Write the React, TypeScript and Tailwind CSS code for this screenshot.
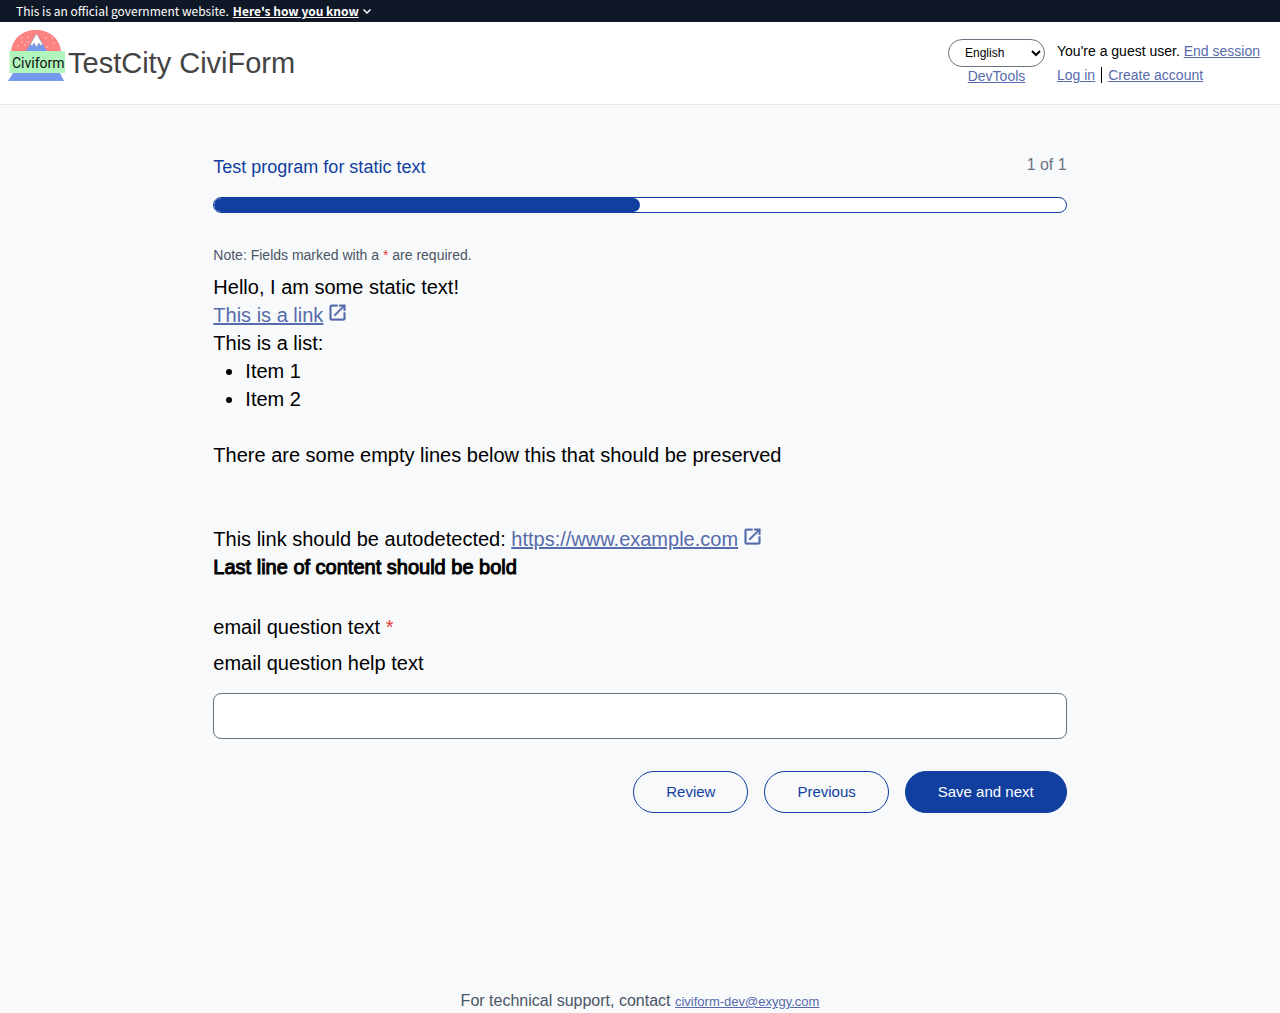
import type { ReactNode } from "react";

const link = "text-[#566bac] underline";

function Logo() {
  return (
    <svg viewBox="0 0 58 52" className="h-[52px] w-[58px] shrink-0" role="img" aria-label="Civiform">
      <path d="M3 22C4 8 15 0 28 0s24 8 25 22z" fill="#fc8181" />
      <path d="M17.500 22L28.500 3.500 39.500 22z" fill="#7699f0" />
      <path d="M22.500 14L28.500 3.500 34.500 14l-1.500 2-2-3-2.500 4-2.500-4-2 3z" fill="#fff" stroke="#8a7f8c" strokeWidth=".4" />
      <g fill="#fed7d7">
        <circle cx="20" cy="7" r=".8" />
        <circle cx="14" cy="8" r=".8" />
        <circle cx="10" cy="16" r=".8" />
        <circle cx="17" cy="15" r=".8" />
        <circle cx="20" cy="12" r=".8" />
        <circle cx="14" cy="12" r=".8" />
        <circle cx="38" cy="8" r=".8" />
        <circle cx="44" cy="8" r=".8" />
        <circle cx="46" cy="13" r=".8" />
        <circle cx="39" cy="17" r=".8" />
      </g>
      <path d="M5 43h47l4 8H0z" fill="#7699f0" />
      <rect x="1.500" y="21" width="55.500" height="22" fill="#b0f5bb" />
      <text x="4" y="38" fontFamily="Roboto, sans-serif" fontSize="14" fill="#111">
        Civiform
      </text>
    </svg>
  );
}

function ExternalLink({ href, children }: { href: string; children: ReactNode }) {
  return (
    <a href={href} className="text-[#566bac]">
      <span className="underline">{children}</span>
      <svg
        viewBox="0 0 24 24"
        className="ml-1 inline size-[21px] align-[-1px]"
        fill="currentColor"
        stroke="currentColor"
        strokeWidth=".4"
        aria-hidden="true"
      >
        <path d="M19 19H5V5h7V3H5a2 2 0 0 0-2 2v14a2 2 0 0 0 2 2h14c1.100 0 2-.9 2-2v-7h-2v7zM14 3v2h3.590l-9.830 9.830 1.410 1.410L19 6.410V10h2V3h-7z" />
      </svg>
    </a>
  );
}

export default function App() {
  return (
    <div className="flex min-h-screen flex-col bg-[#f8f9fb] font-['Liberation_Sans',Arial,sans-serif] text-black">
      <aside className="flex h-[22px] items-center gap-1 bg-gray-900 px-4 font-['Noto_Sans_CJK_SC',sans-serif] text-xs text-white">
        <p>This is an official government website.</p>
        <button type="button" className="flex items-center gap-0.5 font-bold">
          <span className="underline">Here's how you know</span>
          <svg viewBox="0 0 12 12" className="size-3" fill="none" stroke="currentColor" strokeWidth="1.500" aria-hidden="true">
            <path d="M2.500 4.500L6 8l3.500-3.500" />
          </svg>
        </button>
      </aside>

      <header className="flex items-start justify-between border-b border-gray-200 bg-white pt-2 pr-5 pb-[17px] pl-2">
        <div className="flex items-start gap-0.5">
          <Logo />
          <h1 className="pt-[15px] text-[29px] leading-9 text-[#444]">TestCity CiviForm</h1>
        </div>
        <div className="flex gap-3 pt-[9px]">
          <div className="flex flex-col items-center">
            <select
              aria-label="Language"
              defaultValue="en"
              className="h-7 w-[97px] rounded-full border border-gray-500 bg-white px-3 text-xs"
            >
              <option value="en">English</option>
            </select>
            <a href="#devtools" className={`${link} text-sm leading-[18px]`}>
              DevTools
            </a>
          </div>
          <div className="text-sm leading-6">
            <p>
              You're a guest user.{" "}
              <a href="#end" className={link}>
                End session
              </a>
            </p>
            <p className="flex items-center">
              <a href="#login" className={link}>
                Log in
              </a>
              <span className="mx-1.5 h-4 w-px bg-black" />
              <a href="#create" className={link}>
                Create account
              </a>
            </p>
          </div>
        </div>
      </header>

      <main className="mx-auto w-2/3 grow pt-12">
        <div className="flex items-start justify-between">
          <h2 className="pt-0.5 text-lg leading-6 text-[#113f9f]">Test program for static text</h2>
          <p className="text-base text-gray-500">1 of 1</p>
        </div>
        <div className="mt-[18px] h-4 overflow-hidden rounded-full border border-[#113f9f] bg-white">
          <div className="h-full w-1/2 rounded-full bg-[#113f9f]" />
        </div>

        <p className="mt-8 text-sm text-gray-600">
          Note: Fields marked with a <span className="text-[#e53e3e]">*</span> are required.
        </p>

        <div className="mt-2 text-xl leading-7">
          <p>Hello, I am some static text!</p>
          <p>
            <ExternalLink href="#link">This is a link</ExternalLink>
          </p>
          <p>This is a list:</p>
          <ul className="list-disc pl-8">
            <li>Item 1</li>
            <li>Item 2</li>
          </ul>
          <p className="mt-7">There are some empty lines below this that should be preserved</p>
          <p className="mt-14">
            This link should be autodetected:{" "}
            <ExternalLink href="https://www.example.com">https://www.example.com</ExternalLink>
          </p>
          <p>
            <strong className="font-normal [-webkit-text-stroke:1px_black]">Last line of content should be bold</strong>
          </p>
        </div>

        <form className="mt-8 text-xl leading-7" onSubmit={(e) => e.preventDefault()}>
          <label htmlFor="email" className="block">
            email question text <span className="text-[#e53e3e]">*</span>
          </label>
          <p id="email-help" className="mt-2">
            email question help text
          </p>
          <input
            id="email"
            type="email"
            aria-describedby="email-help"
            className="mt-4 block h-[46px] w-full rounded-lg border border-gray-500 bg-white px-3"
          />
          <div className="mt-8 flex justify-end gap-4 text-[15px] leading-6 text-[#113f9f]">
            <button type="button" className="rounded-full border border-[#113f9f] px-8 py-2">
              Review
            </button>
            <button type="button" className="rounded-full border border-[#113f9f] px-8 py-2">
              Previous
            </button>
            <button type="submit" className="rounded-full border border-[#113f9f] bg-[#113f9f] px-8 py-2 text-white">
              Save and next
            </button>
          </div>
        </form>
      </main>

      <footer className="text-center text-base text-gray-600">
        For technical support, contact{" "}
        <a href="mailto:civiform-dev@exygy.com" className={`${link} text-[13px]`}>
          civiform-dev@exygy.com
        </a>
      </footer>
    </div>
  );
}
